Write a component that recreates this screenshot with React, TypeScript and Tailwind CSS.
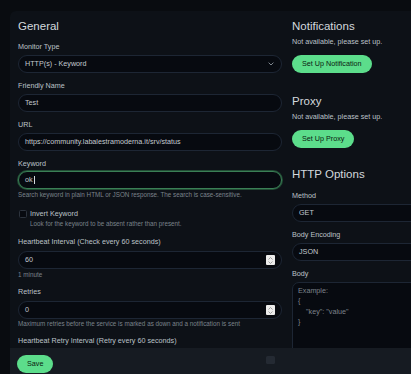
import type { ReactNode } from "react";
import clsx from "clsx";

const Heading = ({ children, className }: { children: ReactNode; className?: string }) => (
	<div className={clsx("shrink-0 text-[11.5px] leading-[14px] text-[#d3d8dd]", className)}>{children}</div>
);

const Label = ({ children, className }: { children: ReactNode; className?: string }) => (
	<div className={clsx("shrink-0 text-[7.2px] leading-[9px] text-[#bcc2c8]", className)}>{children}</div>
);

const Help = ({ children, className }: { children: ReactNode; className?: string }) => (
	<div className={clsx("shrink-0 text-[6.3px] leading-[8px] text-[#7b838b]", className)}>{children}</div>
);

const Field = ({ children, className }: { children?: ReactNode; className?: string }) => (
	<div
		className={clsx(
			"shrink-0 h-[18px] rounded-full border border-[#1d2634] bg-[#070a10] pl-[6px] pr-[6px] flex items-center text-[7.2px] text-[#c3c9cf]",
			className,
		)}
	>
		{children}
	</div>
);

const GreenButton = ({ children }: { children: ReactNode }) => (
	<div className="h-[18px] px-[10px] rounded-full bg-[#5cdd8b] flex items-center text-[7.2px] text-[#0b1a10] self-start">
		{children}
	</div>
);

// chrome's light number spinner
const Spinner = () => (
	<div className="ml-auto w-[9px] h-[10px] rounded-[1px] bg-[#ececec] flex flex-col items-center justify-center gap-[1px]">
		<svg width="5" height="3" viewBox="0 0 5 3">
			<polyline points="0.5,2.5 2.5,0.5 4.5,2.5" fill="none" stroke="#8a8a8a" strokeWidth="0.8" />
		</svg>
		<svg width="5" height="3" viewBox="0 0 5 3">
			<polyline points="0.5,0.5 2.5,2.5 4.5,0.5" fill="none" stroke="#8a8a8a" strokeWidth="0.8" />
		</svg>
	</div>
);

export default function App() {
	return (
		<div className="w-[411px] h-[374px] overflow-hidden bg-[#090c10] pt-[11px] pl-[10px] font-['Liberation_Sans',Arial,sans-serif]">
			<div className="h-full flex flex-col bg-[#0d1117] rounded-tl-[6px] overflow-hidden">
				<div className="flex-1 min-h-0 overflow-hidden flex gap-[10px] px-[8px] pt-[8px]">
					{/* General */}
					<div className="w-[264px] shrink-0 flex flex-col">
						<Heading>General</Heading>
						<Label className="mt-[9px]">Monitor Type</Label>
						<Field className="mt-[4px] pr-[7px]">
							HTTP(s) - Keyword
							<svg className="ml-auto" width="6" height="4" viewBox="0 0 6 4">
								<polyline points="0.6,0.6 3,3 5.4,0.6" fill="none" stroke="#7d858d" strokeWidth="1" />
							</svg>
						</Field>
						<Label className="mt-[8px]">Friendly Name</Label>
						<Field className="mt-[4px]">Test</Field>
						<Label className="mt-[8px]">URL</Label>
						<Field className="mt-[4px]">https://community.labalestramoderna.it/srv/status</Field>
						<Label className="mt-[8px]">Keyword</Label>
						<Field className="mt-[3px] border-[#3b7f56] shadow-[0_0_0_1px_#214d35]">
							ok
							<span className="ml-[1px] w-[1px] h-[8px] bg-[#d5dade]" />
						</Field>
						<Help className="mt-[2px]">
							Search keyword in plain HTML or JSON response. The search is case-sensitive.
						</Help>
						<div className="shrink-0 mt-[10px] flex items-center gap-[3px] pl-[1px]">
							<div className="w-[8px] h-[8px] rounded-[1.5px] border border-[#2c333d] bg-[#070a10]" />
							<Label>Invert Keyword</Label>
						</div>
						<Help className="mt-[2px] pl-[12px]">Look for the keyword to be absent rather than present.</Help>
						<Label className="mt-[9px]">Heartbeat Interval (Check every 60 seconds)</Label>
						<Field className="mt-[5px]">
							60
							<Spinner />
						</Field>
						<Help className="mt-[2px]">1 minute</Help>
						<Label className="mt-[8px]">Retries</Label>
						<Field className="mt-[5px]">
							0
							<Spinner />
						</Field>
						<Help className="mt-[1px]">
							Maximum retries before the service is marked as down and a notification is sent
						</Help>
						<Label className="mt-[8px]">Heartbeat Retry Interval (Retry every 60 seconds)</Label>
					</div>

					{/* Notifications / Proxy / HTTP */}
					<div className="w-[264px] shrink-0 flex flex-col">
						<Heading>Notifications</Heading>
						<Label className="mt-[4px]">Not available, please set up.</Label>
						<div className="shrink-0 mt-[9px] flex">
							<GreenButton>Set Up Notification</GreenButton>
						</div>
						<Heading className="mt-[21px]">Proxy</Heading>
						<Label className="mt-[4px]">Not available, please set up.</Label>
						<div className="shrink-0 mt-[9px] flex">
							<GreenButton>Set Up Proxy</GreenButton>
						</div>
						<Heading className="mt-[19px]">HTTP Options</Heading>
						<Label className="mt-[10px]">Method</Label>
						<Field className="mt-[4px]">GET</Field>
						<Label className="mt-[8px]">Body Encoding</Label>
						<Field className="mt-[4px]">JSON</Field>
						<Label className="mt-[8px]">Body</Label>
						<div className="mt-[4px] h-[110px] shrink-0 rounded-[7px] border border-[#1d2634] bg-[#070a10] pl-[5px] pt-[3px] text-[7.2px] leading-[10.3px] text-[#7d848c] whitespace-pre">
							{"Example:\n{\n    \"key\": \"value\"\n}"}
						</div>
					</div>
				</div>

				{/* bottom bar */}
				<div className="h-[26px] shrink-0 bg-[#161b22] pl-[7px] pt-[7px]">
					<div className="w-[258px] flex justify-between items-start">
						<div className="h-[18px] px-[10px] rounded-full bg-[#5cdd8b] flex items-center text-[7.2px] text-[#0b1a10]">
							Save
						</div>
						<div className="mt-[1px] w-[9px] h-[8px] rounded-[1.5px] bg-[#242a33]" />
					</div>
				</div>
			</div>
		</div>
	);
}
